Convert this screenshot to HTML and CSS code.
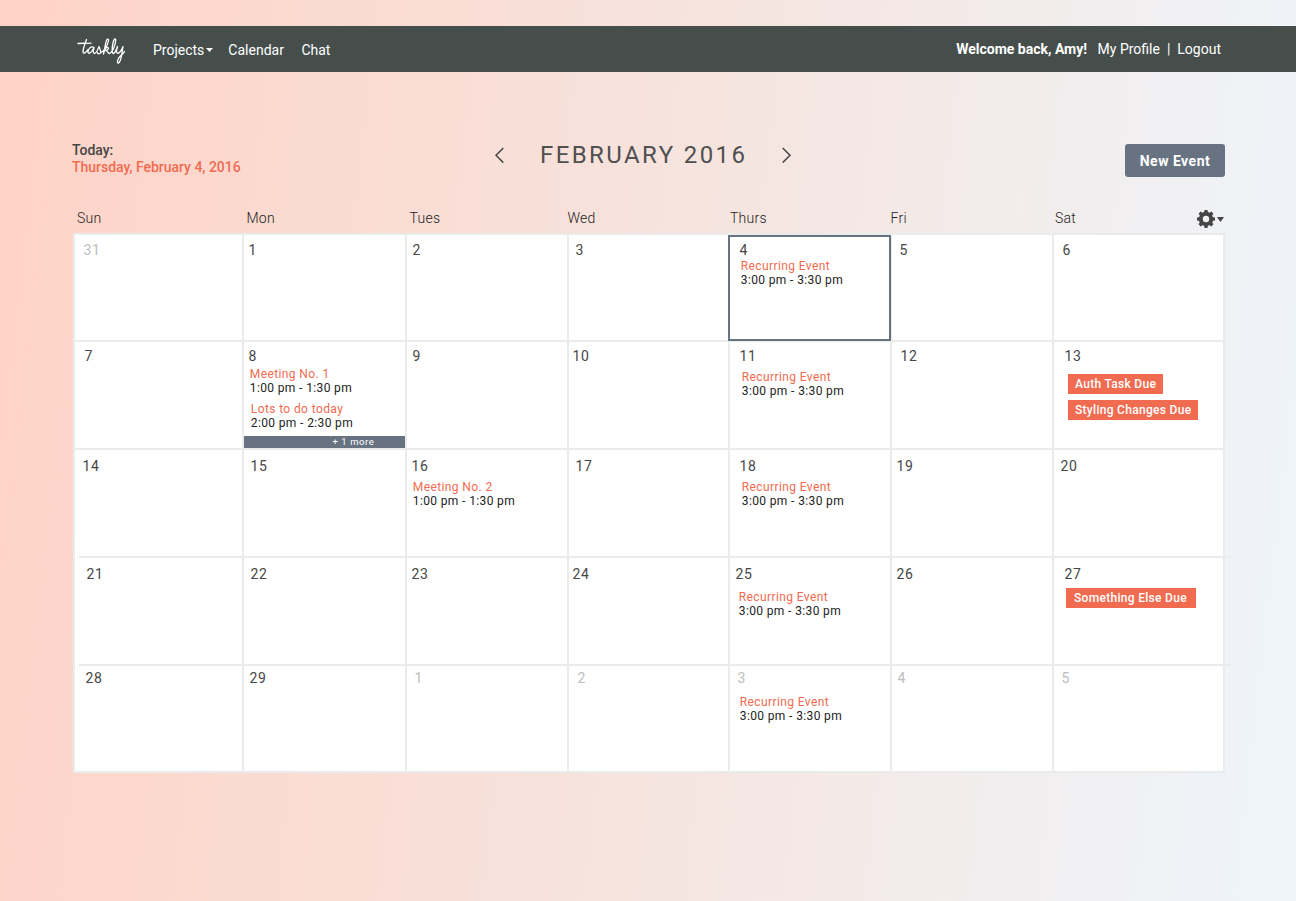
FILE: index.html
```html
<!DOCTYPE html>
<html lang="en">
<head>
<meta charset="utf-8">
<title>Taskly – Calendar</title>
<link rel="stylesheet" href="styles.css">
</head>
<body>
<header class="navbar">
  <svg class="logo" width="50" height="30" viewBox="0 0 50 30" role="img" aria-label="taskly">
    <path d="M1 7.5C6 7 9 7.500 14 7.200M9.500 3.500C8 8 6 13 6 15.500C6 18.500 9 17 11 13.500M17 11.500C14 9.500 11 13 11 16C11 18.500 14.500 17.500 17 11.500C16 15 16 17.500 17.500 17.500C19.500 17.500 21 13 22 10.500C22.500 13 24.500 15 23.500 17C22.500 18.500 20 17.500 20.500 16.500M23.500 17C28 15 31 8 31.500 4.500C31.600 2 29.500 3 29 6L26.500 18C27.500 13 29.500 11 31 11.500C32.500 12.500 30 14.500 28.500 14.500C31 14 30.500 17.800 32.500 17.500C36 16 38.500 8 38.700 4.500C38.800 1.500 36.500 3 36 7C35 12 34.500 17.500 36.500 17.500C38.500 17 39.500 13 40.500 10.500C39 15 39.500 17.500 41 17.300C43.500 16.500 45 13 46 10.500C45 16 44.500 26 41.500 27C39.500 27.300 40.500 23 43 20.500C45 18.500 46.500 17.500 47.500 15.500"/>
  </svg>
  <nav class="menu">
    <a class="menu-item menu-projects">Projects<svg class="caret" width="7" height="4" viewBox="0 0 7 4"><path d="M0 0h7L3.500 4z"/></svg></a>
    <a class="menu-item">Calendar</a>
    <a class="menu-item">Chat</a>
  </nav>
  <div class="account"><strong class="welcome">Welcome back, Amy!</strong><a>My Profile</a><span class="divider">|</span><a>Logout</a></div>
</header>
<main class="page">
  <section class="toolbar">
    <div class="today-label">Today:<div class="today-date">Thursday, February 4, 2016</div></div>
    <div class="month">
      <svg class="arrow" width="10" height="16" viewBox="0 0 10 16"><path d="M9.300 1L2 8.300L9.300 15.600"/></svg>
      <h1 class="month-name">FEBRUARY 2016</h1>
      <svg class="arrow" width="10" height="16" viewBox="0 0 10 16"><path d="M.7 1L8 8.300L.7 15.600"/></svg>
    </div>
    <button class="new-event">New Event</button>
  </section>
  <div class="weekdays">
    <span>Sun</span><span>Mon</span><span>Tues</span><span>Wed</span><span>Thurs</span><span>Fri</span>
    <div class="weekday-last"><span>Sat</span>
      <svg class="settings" width="27" height="18" viewBox="0 0 27 18"><g transform="translate(9 9)"><circle class="gear-ring" r="5.200"/><path id="teeth" class="gear-teeth" d="M-2 -6L-1.500 -9H1.500L2 -6zM-2 6L-1.500 9H1.500L2 6zM-6 -2L-9 -1.500V1.500L-6 2zM6 -2L9 -1.500V1.500L6 2z"/><use href="#teeth" transform="rotate(45)"/></g><path class="gear-teeth" d="M20 7h7L23.500 12z"/></svg>
    </div>
  </div>
  <section class="calendar">
    <div class="week week-1">
      <div class="day in-8 muted"><div class="date">31</div></div>
      <div class="day in-4"><div class="date">1</div></div>
      <div class="day in-5"><div class="date">2</div></div>
      <div class="day in-6"><div class="date">3</div></div>
      <div class="day in-9 today"><div class="date">4</div><div class="event gap-1 shift-1"><div class="event-title">Recurring Event</div>3:00 pm - 3:30 pm</div></div>
      <div class="day in-7"><div class="date">5</div></div>
      <div class="day in-8"><div class="date">6</div></div>
    </div>
    <div class="week week-2">
      <div class="day in-9"><div class="date">7</div></div>
      <div class="day in-4"><div class="date">8</div><div class="event gap-3 shift-1"><div class="event-title">Meeting No. 1</div>1:00 pm - 1:30 pm</div><div class="event gap-7 shift-2"><div class="event-title">Lots to do today</div>2:00 pm - 2:30 pm</div><div class="more">+ 1 more</div></div>
      <div class="day in-5"><div class="date">9</div></div>
      <div class="day in-3"><div class="date">10</div></div>
      <div class="day in-9"><div class="date">11</div><div class="event gap-6 shift-2"><div class="event-title">Recurring Event</div>3:00 pm - 3:30 pm</div></div>
      <div class="day in-8"><div class="date">12</div></div>
      <div class="day in-10"><div class="date">13</div><div class="task task-auth">Auth Task Due</div><div class="task task-styling">Styling Changes Due</div></div>
    </div>
    <div class="week week-3">
      <div class="day in-7"><div class="date">14</div></div>
      <div class="day in-6"><div class="date">15</div></div>
      <div class="day in-4"><div class="date">16</div><div class="event gap-6 shift-1"><div class="event-title">Meeting No. 2</div>1:00 pm - 1:30 pm</div></div>
      <div class="day in-6"><div class="date">17</div></div>
      <div class="day in-9"><div class="date">18</div><div class="event gap-6 shift-2"><div class="event-title">Recurring Event</div>3:00 pm - 3:30 pm</div></div>
      <div class="day in-4"><div class="date">19</div></div>
      <div class="day in-6"><div class="date">20</div></div>
    </div>
    <div class="week week-4 offset">
      <div class="day in-11"><div class="date">21</div></div>
      <div class="day in-6"><div class="date">22</div></div>
      <div class="day in-4"><div class="date">23</div></div>
      <div class="day in-3"><div class="date">24</div></div>
      <div class="day in-5"><div class="date">25</div><div class="event gap-8 shift-3"><div class="event-title">Recurring Event</div>3:00 pm - 3:30 pm</div></div>
      <div class="day in-4"><div class="date">26</div></div>
      <div class="day in-10"><div class="date">27</div><div class="task task-other">Something Else Due</div></div>
    </div>
    <div class="week week-5 offset">
      <div class="day in-10"><div class="date">28</div></div>
      <div class="day in-5"><div class="date">29</div></div>
      <div class="day in-7 muted"><div class="date">1</div></div>
      <div class="day in-8 muted"><div class="date">2</div></div>
      <div class="day in-7 muted"><div class="date">3</div><div class="event gap-9 shift-2"><div class="event-title">Recurring Event</div>3:00 pm - 3:30 pm</div></div>
      <div class="day in-5 muted"><div class="date">4</div></div>
      <div class="day in-7 muted"><div class="date">5</div></div>
    </div>
  </section>
</main>
</body>
</html>
```
FILE: styles.css
```css
*, *::before, *::after { box-sizing: border-box; }

body {
  margin: 0;
  padding-top: 26px;
  height: 901px;
  overflow: hidden;
  font-family: Roboto, "Liberation Sans", sans-serif;
  color: #464646;
  background: linear-gradient(96.5deg, #ffd3c7 1%, #f6e4de 51%, #eff4f9 96%);
}

/* Navigation */
.navbar {
  display: flex;
  height: 46px;
  padding: 0 75px 0 77px;
  background: #464e4c;
  color: #fff;
  font-size: 14px;
  line-height: 16px;
}
.logo { margin-top: 10px; fill: none; stroke: #fff; stroke-width: 1.3; stroke-linecap: round; stroke-linejoin: round; }
.menu { display: flex; margin: 16px 0 0 26px; }
.menu-item { margin-right: 17.5px; }
.menu-projects { margin-right: 15px; }
.caret { margin: 0 0 3px 2px; fill: #fff; }
.account { margin: 15px 0 0 auto; white-space: nowrap; }
.welcome { margin-right: 10.5px; }
.divider { margin: 0 7px; }

/* Toolbar */
.page { padding-left: 72px; width: 1225px; }
.toolbar { display: flex; height: 138px; padding-top: 70px; }
.today-label { width: 422px; font-size: 14px; font-weight: 500; line-height: 17px; letter-spacing: -.02px; }
.today-date { color: #f16b51; }
.month { display: flex; align-items: flex-start; }
.arrow { margin-top: 5px; fill: none; stroke: #464646; stroke-width: 1.500; }
.month-name { width: 208px; margin: -1px 34px 0 36px; font-size: 24px; font-weight: 400; line-height: 29px; letter-spacing: 2.400px; white-space: nowrap; color: #505050; }
.new-event {
  width: 100px;
  height: 33px;
  margin: 2px 0 0 auto;
  padding: 1px 0 0;
  border: 0;
  border-radius: 3px;
  background: #687382;
  color: #fff;
  font: 700 14px/32px Roboto, "Liberation Sans", sans-serif;
  letter-spacing: .5px;
}

/* Weekday labels */
.weekdays {
  display: grid;
  grid-template-columns: 169.5px 163px 158px 162.500px 160.500px 164.500px 169px;
  height: 23px;
  padding-left: 5px;
  font-size: 14px;
  font-weight: 300;
  line-height: 17px;
  letter-spacing: .25px;
  color: #222;
}
.weekday-last { display: flex; justify-content: space-between; }
.gear-ring { fill: none; stroke: #464646; stroke-width: 4; }
.gear-teeth { fill: #464646; }

/* Calendar grid */
.calendar { width: 1152px; margin-left: 1px; border-right: 2px solid #eaebeb; border-bottom: 2px solid #eaebeb; background: #fff; }
.week {
  position: relative;
  display: grid;
  grid-template-columns: 169px 163px 162px 161px 162px 162px 171px;
}
.week::before { content: ""; position: absolute; top: 0; left: 0; right: 0; height: 2px; background: #eaebeb; }
.offset::before { left: 6px; right: -8px; }
.week-1 { height: 107px; --top: 9px; }
.week-2 { height: 108px; --top: 8px; }
.week-3 { height: 108px; --top: 10px; }
.week-4 { height: 108px; --top: 10px; }
.week-5 { height: 107px; --top: 6px; }
.day { position: relative; border-left: 2px solid #eaebeb; padding: var(--top) 0 0 var(--inset); }
.in-3 { --inset: 3px; }
.in-4 { --inset: 4px; }
.in-5 { --inset: 5px; }
.in-6 { --inset: 6px; }
.in-7 { --inset: 7px; }
.in-8 { --inset: 8px; }
.in-9 { --inset: 9px; }
.in-10 { --inset: 10px; }
.in-11 { --inset: 11px; }
.date { margin-left: .6px; font-size: 14px; line-height: 16px; letter-spacing: .45px; }
.muted .date { color: #bdbdbd; }
.today::after { content: ""; position: absolute; z-index: 1; top: 2px; left: -2px; width: 163px; height: 106px; border: 2px solid #687382; }

/* Entries */
.event { font-size: 12px; line-height: 14px; letter-spacing: .37px; color: #222; white-space: nowrap; }
.event-title { color: #f16b51; letter-spacing: .39px; }
.gap-1 { margin-top: 1px; }
.gap-3 { margin-top: 3px; }
.gap-6 { margin-top: 6px; }
.gap-7 { margin-top: 7px; }
.gap-8 { margin-top: 8px; }
.gap-9 { margin-top: 9px; }
.shift-1 { margin-left: 1.8px; }
.shift-2 { margin-left: 2.8px; }
.shift-3 { margin-left: 3.8px; }
.more {
  height: 12px;
  margin: 6px 0 0 -4px;
  padding-left: 88.5px;
  background: #687382;
  color: #fff;
  font-size: 9.5px;
  line-height: 12px;
  letter-spacing: .55px;
}
.task { width: 130px; height: 20px; padding-left: 7px; background: #f16b51; color: #fff; font-size: 12px; font-weight: 500; line-height: 20px; letter-spacing: .3px; white-space: nowrap; }
.task-auth { width: 95px; margin: 10px 0 6px 4px; }
.task-styling { margin-left: 4px; }
.task-other { margin: 6px 0 0 2px; padding-left: 8px; }
```
